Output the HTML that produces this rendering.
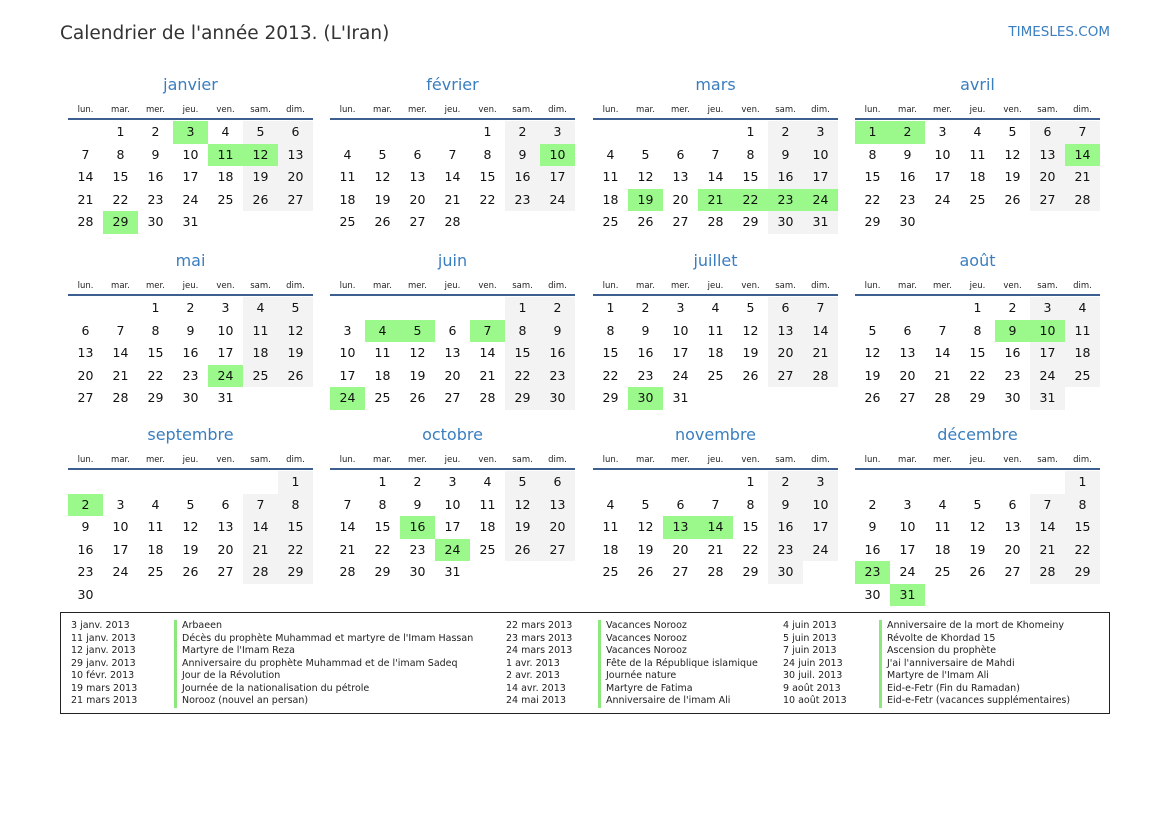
<!DOCTYPE html>
<html><head><meta charset="utf-8"><style>
*{margin:0;padding:0;box-sizing:border-box}
body{width:1169px;height:827px;background:#fff;font-family:"DejaVu Sans","Liberation Sans",sans-serif;color:#111;position:relative;overflow:hidden}
.h1{position:absolute;left:60px;top:21px;font-size:18.5px;color:#333;line-height:26px}
.site{position:absolute;right:59px;top:24px;font-size:13.5px;color:#3a7ebf}
.m{position:absolute;width:245px}
.t{position:absolute;top:-44px;left:0;width:245px;text-align:center;font-size:16px;line-height:20px;color:#3a7ebf}
.d{position:absolute;top:-15px;left:0;display:flex;width:245px}
.d span{width:35px;text-align:center;font-size:8.5px;line-height:12px;color:#222}
.l{position:absolute;top:-1px;left:0;width:245px;height:2px;background:#3d5f8f}
table{position:absolute;top:2px;left:0;border-collapse:collapse;table-layout:fixed;width:245px}
td{width:35px;height:22.5px;text-align:center;font-size:12.5px;padding:0;line-height:22.5px}
td:nth-child(n+6):not(:empty){background:#f3f3f3}
td.g,td.g:nth-child(n+6){background:#9af98a}
.lg{position:absolute;left:60px;top:612px;width:1050px;height:102px;border:1px solid #222}
.c{position:absolute;top:7px;font-size:9.5px;line-height:12.5px;color:#222;white-space:nowrap}
.b{border-left:3px solid #8ee77c;padding-left:5px}
</style></head><body>
<div class="h1">Calendrier de l'année 2013. (L'Iran)</div>
<div class="site">TIMESLES.COM</div>

<div class="m" style="left:68px;top:119px"><div class="t">janvier</div><div class="d"><span>lun.</span><span>mar.</span><span>mer.</span><span>jeu.</span><span>ven.</span><span>sam.</span><span>dim.</span></div><div class="l"></div><table>
<tr><td></td><td>1</td><td>2</td><td class="g">3</td><td>4</td><td>5</td><td>6</td></tr>
<tr><td>7</td><td>8</td><td>9</td><td>10</td><td class="g">11</td><td class="g">12</td><td>13</td></tr>
<tr><td>14</td><td>15</td><td>16</td><td>17</td><td>18</td><td>19</td><td>20</td></tr>
<tr><td>21</td><td>22</td><td>23</td><td>24</td><td>25</td><td>26</td><td>27</td></tr>
<tr><td>28</td><td class="g">29</td><td>30</td><td>31</td><td></td><td></td><td></td></tr></table></div>

<div class="m" style="left:330px;top:119px"><div class="t">février</div><div class="d"><span>lun.</span><span>mar.</span><span>mer.</span><span>jeu.</span><span>ven.</span><span>sam.</span><span>dim.</span></div><div class="l"></div><table>
<tr><td></td><td></td><td></td><td></td><td>1</td><td>2</td><td>3</td></tr>
<tr><td>4</td><td>5</td><td>6</td><td>7</td><td>8</td><td>9</td><td class="g">10</td></tr>
<tr><td>11</td><td>12</td><td>13</td><td>14</td><td>15</td><td>16</td><td>17</td></tr>
<tr><td>18</td><td>19</td><td>20</td><td>21</td><td>22</td><td>23</td><td>24</td></tr>
<tr><td>25</td><td>26</td><td>27</td><td>28</td><td></td><td></td><td></td></tr></table></div>

<div class="m" style="left:593px;top:119px"><div class="t">mars</div><div class="d"><span>lun.</span><span>mar.</span><span>mer.</span><span>jeu.</span><span>ven.</span><span>sam.</span><span>dim.</span></div><div class="l"></div><table>
<tr><td></td><td></td><td></td><td></td><td>1</td><td>2</td><td>3</td></tr>
<tr><td>4</td><td>5</td><td>6</td><td>7</td><td>8</td><td>9</td><td>10</td></tr>
<tr><td>11</td><td>12</td><td>13</td><td>14</td><td>15</td><td>16</td><td>17</td></tr>
<tr><td>18</td><td class="g">19</td><td>20</td><td class="g">21</td><td class="g">22</td><td class="g">23</td><td class="g">24</td></tr>
<tr><td>25</td><td>26</td><td>27</td><td>28</td><td>29</td><td>30</td><td>31</td></tr></table></div>

<div class="m" style="left:855px;top:119px"><div class="t">avril</div><div class="d"><span>lun.</span><span>mar.</span><span>mer.</span><span>jeu.</span><span>ven.</span><span>sam.</span><span>dim.</span></div><div class="l"></div><table>
<tr><td class="g">1</td><td class="g">2</td><td>3</td><td>4</td><td>5</td><td>6</td><td>7</td></tr>
<tr><td>8</td><td>9</td><td>10</td><td>11</td><td>12</td><td>13</td><td class="g">14</td></tr>
<tr><td>15</td><td>16</td><td>17</td><td>18</td><td>19</td><td>20</td><td>21</td></tr>
<tr><td>22</td><td>23</td><td>24</td><td>25</td><td>26</td><td>27</td><td>28</td></tr>
<tr><td>29</td><td>30</td><td></td><td></td><td></td><td></td><td></td></tr></table></div>

<div class="m" style="left:68px;top:295px"><div class="t">mai</div><div class="d"><span>lun.</span><span>mar.</span><span>mer.</span><span>jeu.</span><span>ven.</span><span>sam.</span><span>dim.</span></div><div class="l"></div><table>
<tr><td></td><td></td><td>1</td><td>2</td><td>3</td><td>4</td><td>5</td></tr>
<tr><td>6</td><td>7</td><td>8</td><td>9</td><td>10</td><td>11</td><td>12</td></tr>
<tr><td>13</td><td>14</td><td>15</td><td>16</td><td>17</td><td>18</td><td>19</td></tr>
<tr><td>20</td><td>21</td><td>22</td><td>23</td><td class="g">24</td><td>25</td><td>26</td></tr>
<tr><td>27</td><td>28</td><td>29</td><td>30</td><td>31</td><td></td><td></td></tr></table></div>

<div class="m" style="left:330px;top:295px"><div class="t">juin</div><div class="d"><span>lun.</span><span>mar.</span><span>mer.</span><span>jeu.</span><span>ven.</span><span>sam.</span><span>dim.</span></div><div class="l"></div><table>
<tr><td></td><td></td><td></td><td></td><td></td><td>1</td><td>2</td></tr>
<tr><td>3</td><td class="g">4</td><td class="g">5</td><td>6</td><td class="g">7</td><td>8</td><td>9</td></tr>
<tr><td>10</td><td>11</td><td>12</td><td>13</td><td>14</td><td>15</td><td>16</td></tr>
<tr><td>17</td><td>18</td><td>19</td><td>20</td><td>21</td><td>22</td><td>23</td></tr>
<tr><td class="g">24</td><td>25</td><td>26</td><td>27</td><td>28</td><td>29</td><td>30</td></tr></table></div>

<div class="m" style="left:593px;top:295px"><div class="t">juillet</div><div class="d"><span>lun.</span><span>mar.</span><span>mer.</span><span>jeu.</span><span>ven.</span><span>sam.</span><span>dim.</span></div><div class="l"></div><table>
<tr><td>1</td><td>2</td><td>3</td><td>4</td><td>5</td><td>6</td><td>7</td></tr>
<tr><td>8</td><td>9</td><td>10</td><td>11</td><td>12</td><td>13</td><td>14</td></tr>
<tr><td>15</td><td>16</td><td>17</td><td>18</td><td>19</td><td>20</td><td>21</td></tr>
<tr><td>22</td><td>23</td><td>24</td><td>25</td><td>26</td><td>27</td><td>28</td></tr>
<tr><td>29</td><td class="g">30</td><td>31</td><td></td><td></td><td></td><td></td></tr></table></div>

<div class="m" style="left:855px;top:295px"><div class="t">août</div><div class="d"><span>lun.</span><span>mar.</span><span>mer.</span><span>jeu.</span><span>ven.</span><span>sam.</span><span>dim.</span></div><div class="l"></div><table>
<tr><td></td><td></td><td></td><td>1</td><td>2</td><td>3</td><td>4</td></tr>
<tr><td>5</td><td>6</td><td>7</td><td>8</td><td class="g">9</td><td class="g">10</td><td>11</td></tr>
<tr><td>12</td><td>13</td><td>14</td><td>15</td><td>16</td><td>17</td><td>18</td></tr>
<tr><td>19</td><td>20</td><td>21</td><td>22</td><td>23</td><td>24</td><td>25</td></tr>
<tr><td>26</td><td>27</td><td>28</td><td>29</td><td>30</td><td>31</td><td></td></tr></table></div>

<div class="m" style="left:68px;top:469px"><div class="t">septembre</div><div class="d"><span>lun.</span><span>mar.</span><span>mer.</span><span>jeu.</span><span>ven.</span><span>sam.</span><span>dim.</span></div><div class="l"></div><table>
<tr><td></td><td></td><td></td><td></td><td></td><td></td><td>1</td></tr>
<tr><td class="g">2</td><td>3</td><td>4</td><td>5</td><td>6</td><td>7</td><td>8</td></tr>
<tr><td>9</td><td>10</td><td>11</td><td>12</td><td>13</td><td>14</td><td>15</td></tr>
<tr><td>16</td><td>17</td><td>18</td><td>19</td><td>20</td><td>21</td><td>22</td></tr>
<tr><td>23</td><td>24</td><td>25</td><td>26</td><td>27</td><td>28</td><td>29</td></tr>
<tr><td>30</td><td></td><td></td><td></td><td></td><td></td><td></td></tr></table></div>

<div class="m" style="left:330px;top:469px"><div class="t">octobre</div><div class="d"><span>lun.</span><span>mar.</span><span>mer.</span><span>jeu.</span><span>ven.</span><span>sam.</span><span>dim.</span></div><div class="l"></div><table>
<tr><td></td><td>1</td><td>2</td><td>3</td><td>4</td><td>5</td><td>6</td></tr>
<tr><td>7</td><td>8</td><td>9</td><td>10</td><td>11</td><td>12</td><td>13</td></tr>
<tr><td>14</td><td>15</td><td class="g">16</td><td>17</td><td>18</td><td>19</td><td>20</td></tr>
<tr><td>21</td><td>22</td><td>23</td><td class="g">24</td><td>25</td><td>26</td><td>27</td></tr>
<tr><td>28</td><td>29</td><td>30</td><td>31</td><td></td><td></td><td></td></tr></table></div>

<div class="m" style="left:593px;top:469px"><div class="t">novembre</div><div class="d"><span>lun.</span><span>mar.</span><span>mer.</span><span>jeu.</span><span>ven.</span><span>sam.</span><span>dim.</span></div><div class="l"></div><table>
<tr><td></td><td></td><td></td><td></td><td>1</td><td>2</td><td>3</td></tr>
<tr><td>4</td><td>5</td><td>6</td><td>7</td><td>8</td><td>9</td><td>10</td></tr>
<tr><td>11</td><td>12</td><td class="g">13</td><td class="g">14</td><td>15</td><td>16</td><td>17</td></tr>
<tr><td>18</td><td>19</td><td>20</td><td>21</td><td>22</td><td>23</td><td>24</td></tr>
<tr><td>25</td><td>26</td><td>27</td><td>28</td><td>29</td><td>30</td><td></td></tr></table></div>

<div class="m" style="left:855px;top:469px"><div class="t">décembre</div><div class="d"><span>lun.</span><span>mar.</span><span>mer.</span><span>jeu.</span><span>ven.</span><span>sam.</span><span>dim.</span></div><div class="l"></div><table>
<tr><td></td><td></td><td></td><td></td><td></td><td></td><td>1</td></tr>
<tr><td>2</td><td>3</td><td>4</td><td>5</td><td>6</td><td>7</td><td>8</td></tr>
<tr><td>9</td><td>10</td><td>11</td><td>12</td><td>13</td><td>14</td><td>15</td></tr>
<tr><td>16</td><td>17</td><td>18</td><td>19</td><td>20</td><td>21</td><td>22</td></tr>
<tr><td class="g">23</td><td>24</td><td>25</td><td>26</td><td>27</td><td>28</td><td>29</td></tr>
<tr><td>30</td><td class="g">31</td><td></td><td></td><td></td><td></td><td></td></tr></table></div>

<div class="lg">
<div class="c" style="left:10px">3 janv. 2013<br>11 janv. 2013<br>12 janv. 2013<br>29 janv. 2013<br>10 févr. 2013<br>19 mars 2013<br>21 mars 2013</div>
<div class="c b" style="left:113px">Arbaeen<br>Décès du prophète Muhammad et martyre de l'Imam Hassan<br>Martyre de l'Imam Reza<br>Anniversaire du prophète Muhammad et de l'imam Sadeq<br>Jour de la Révolution<br>Journée de la nationalisation du pétrole<br>Norooz (nouvel an persan)</div>
<div class="c" style="left:445px">22 mars 2013<br>23 mars 2013<br>24 mars 2013<br>1 avr. 2013<br>2 avr. 2013<br>14 avr. 2013<br>24 mai 2013</div>
<div class="c b" style="left:537px">Vacances Norooz<br>Vacances Norooz<br>Vacances Norooz<br>Fête de la République islamique<br>Journée nature<br>Martyre de Fatima<br>Anniversaire de l'imam Ali</div>
<div class="c" style="left:722px">4 juin 2013<br>5 juin 2013<br>7 juin 2013<br>24 juin 2013<br>30 juil. 2013<br>9 août 2013<br>10 août 2013</div>
<div class="c b" style="left:818px">Anniversaire de la mort de Khomeiny<br>Révolte de Khordad 15<br>Ascension du prophète<br>J'ai l'anniversaire de Mahdi<br>Martyre de l'Imam Ali<br>Eid-e-Fetr (Fin du Ramadan)<br>Eid-e-Fetr (vacances supplémentaires)</div>
</div>
</body></html>
